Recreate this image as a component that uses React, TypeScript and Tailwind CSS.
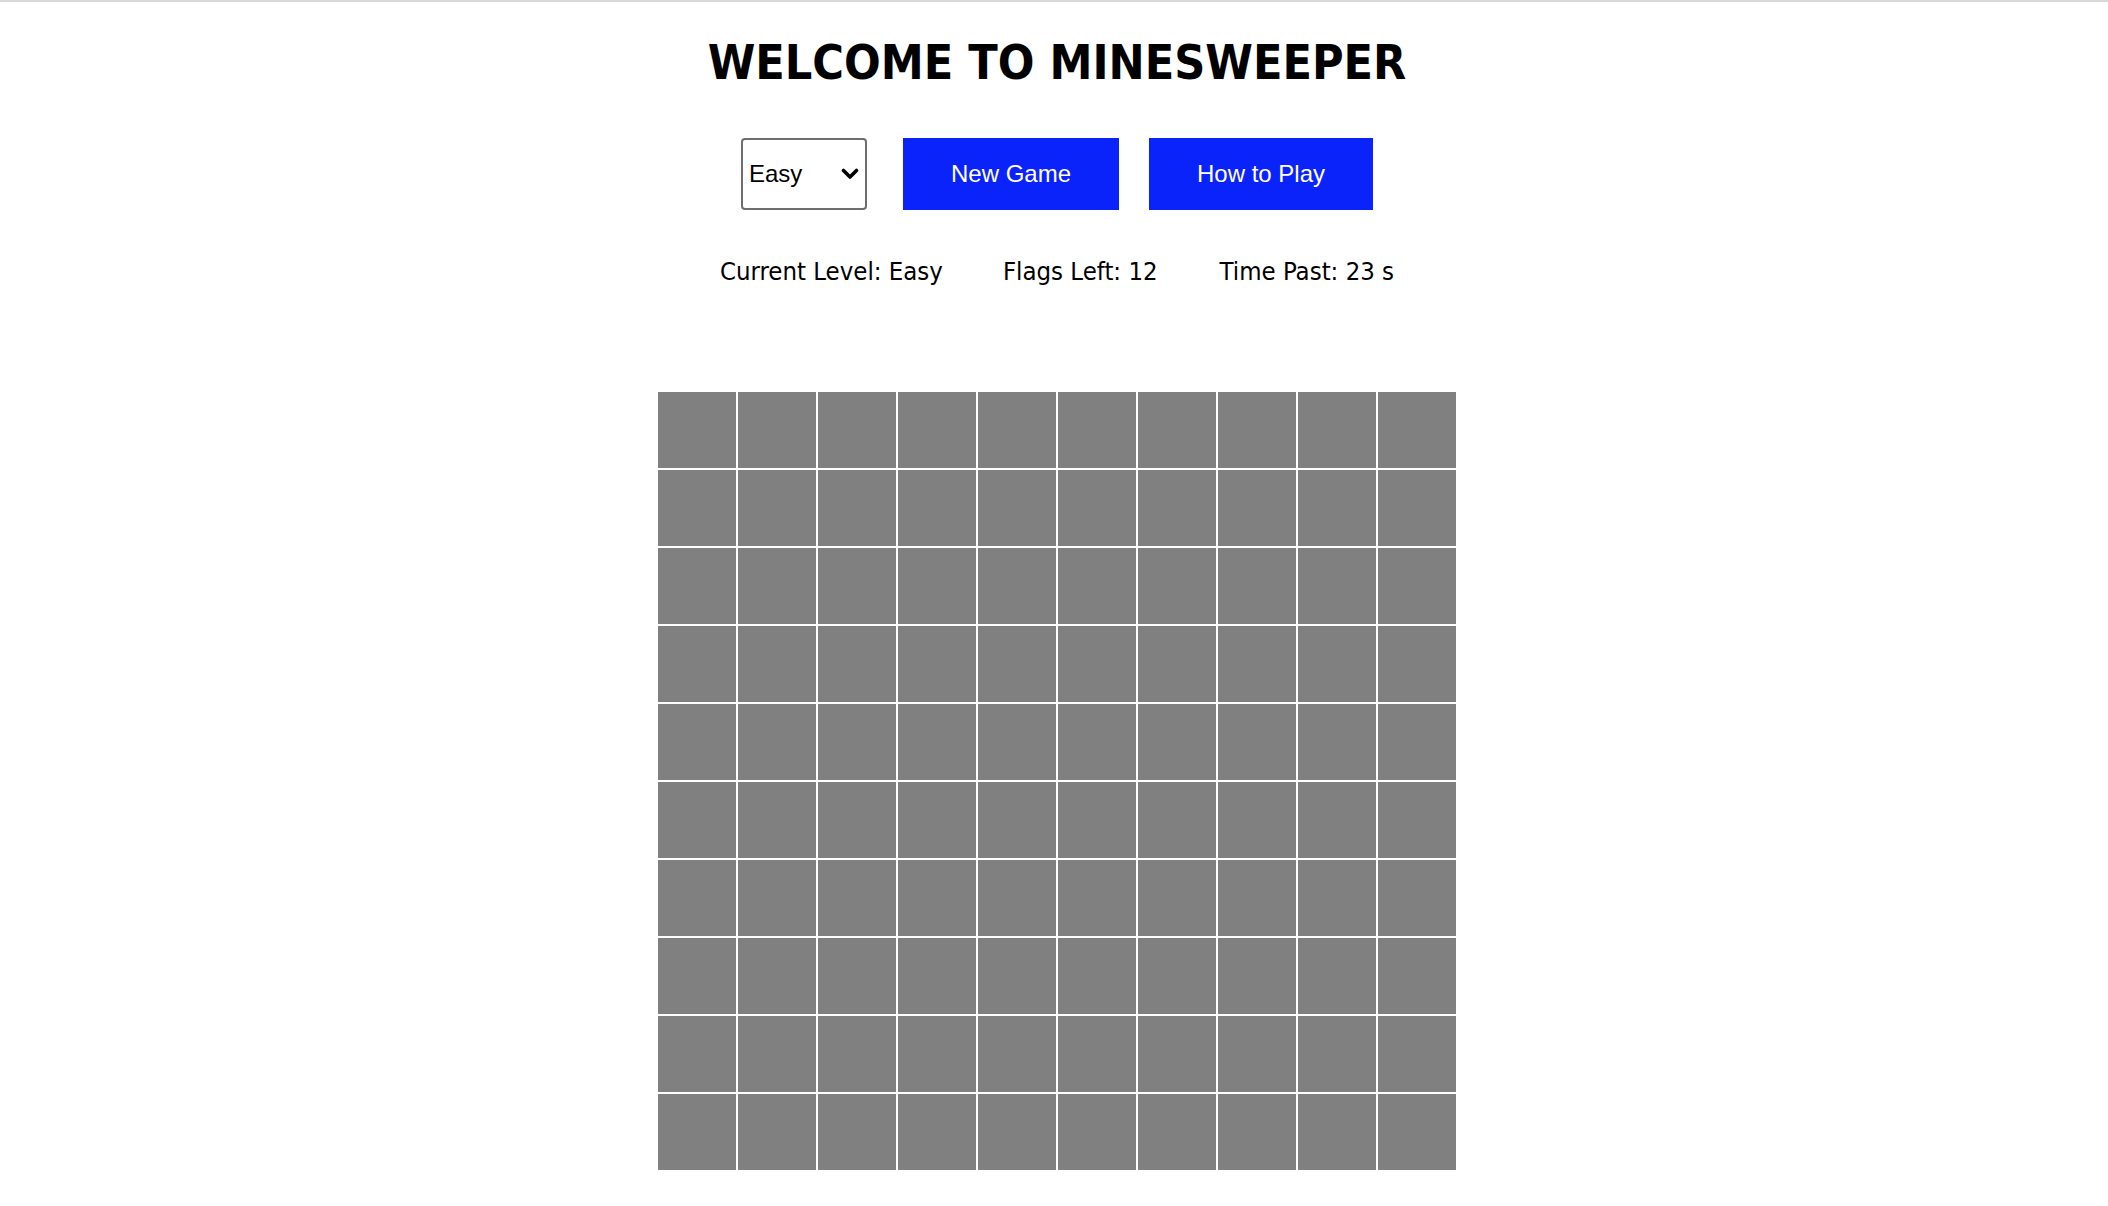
import React from "react";

export default function App() {
  const cells = Array.from({ length: 100 }, (_, i) => i);
  return (
    <div className="min-h-screen bg-white">
      <div className="h-[2px] bg-[#d8d8dc]" />
      <div className="flex flex-col items-center pl-[6px]">
        <h1
          className="mt-[36px] text-[48px] leading-none font-bold text-black tracking-[0px]"
          style={{ fontFamily: "'DejaVu Sans Condensed', 'DejaVu Sans', sans-serif" }}
        >
          WELCOME TO MINESWEEPER
        </h1>
        <div
          className="mt-[52px] flex items-center"
          style={{ fontFamily: "'Liberation Sans', Arial, sans-serif" }}
        >
          <div className="relative h-[72px] w-[126px]">
            <select
              defaultValue="Easy"
              className="h-full w-full appearance-none rounded-[4px] border-2 border-[#6e6e6e] bg-white pl-[6px] text-[24px] text-black outline-none"
              style={{ fontFamily: "'Liberation Sans', Arial, sans-serif" }}
            >
              <option>Easy</option>
              <option>Medium</option>
              <option>Hard</option>
            </select>
            <svg
              className="pointer-events-none absolute right-[8px] top-[30px]"
              width="18"
              height="12"
              viewBox="0 0 18 12"
            >
              <polyline
                points="2.5,2.5 9,9 15.5,2.5"
                fill="none"
                stroke="#000"
                strokeWidth="3.6"
                strokeLinecap="round"
                strokeLinejoin="round"
              />
            </svg>
          </div>
          <button className="ml-[36px] h-[72px] w-[216px] bg-[#0b23fb] text-[24px] text-white">
            New Game
          </button>
          <button className="ml-[30px] h-[72px] w-[224px] bg-[#0b23fb] text-[24px] text-white">
            How to Play
          </button>
        </div>
        <div
          className="mt-[49px] flex items-center text-[25.5px] leading-none text-black"
          style={{ fontFamily: "'DejaVu Sans Condensed', 'DejaVu Sans', sans-serif" }}
        >
          <span>Current Level: Easy</span>
          <span className="ml-[60px]">Flags Left: 12</span>
          <span className="ml-[62px]">Time Past: 23 s</span>
        </div>
        <div className="mt-[106px] grid grid-cols-[repeat(10,80px)]">
          {cells.map((i) => (
            <div key={i} className="h-[78px] w-[80px] border border-white bg-[#808080]" />
          ))}
        </div>
      </div>
    </div>
  );
}
